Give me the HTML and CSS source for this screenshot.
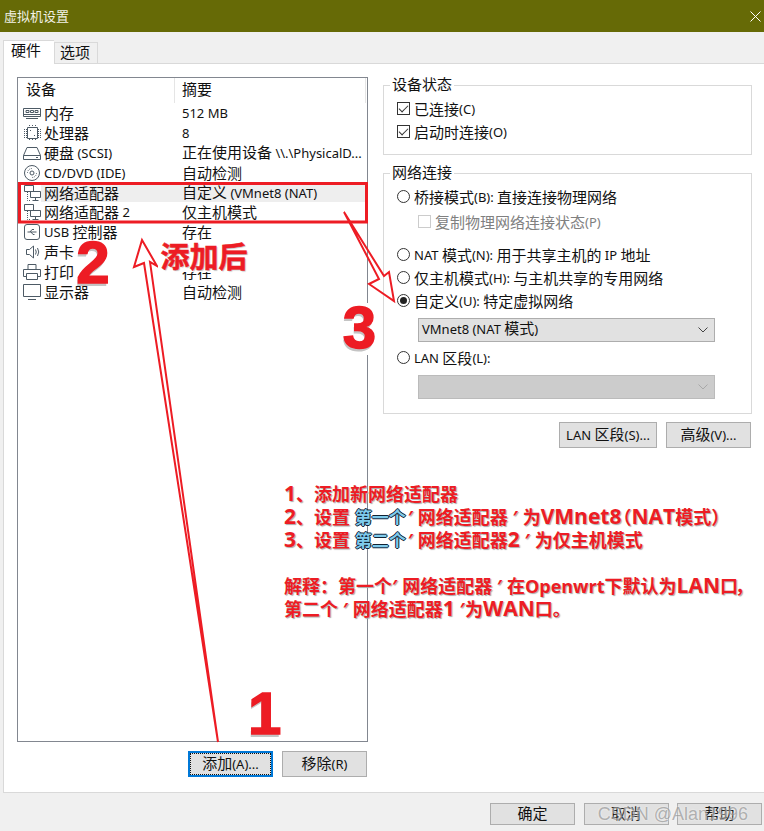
FILE: index.html
```html
<!DOCTYPE html>
<html lang="zh-CN">
<head>
<meta charset="utf-8">
<title>虚拟机设置</title>
<link rel="stylesheet" href="styles.css">
</head>
<body>
<div class="page">
  <header class="titlebar">
    <span class="title">虚拟机设置</span>
    <svg class="close" viewBox="0 0 11 11"><path d="M.5.5l10 10M10.500.5l-10 10"/></svg>
  </header>
  <nav class="tabs">
    <div class="tab active">硬件</div>
    <div class="tab">选项</div>
  </nav>
  <main class="panel">
    <section class="leftcol">
      <div class="list">
        <div class="list-head">
          <div class="h1">设备</div>
          <div class="h2">摘要</div>
        </div>
        <div class="row">
          <div class="dev"><svg class="ic" viewBox="0 0 18 16"><path d="M.5 3.500h17v8h-17zM.5 9.500h17M3 5.500h3v2H3zM7.500 5.500h3v2h-3zM12 5.500h3v2h-3zM3 13.500h12"/></svg>内存</div>
          <div class="sum"><span class="l">512 MB</span></div>
        </div>
        <div class="row">
          <div class="dev"><svg class="ic" viewBox="0 0 18 16"><path d="M4.500 2.500h10v11h-10z"/><path class="dash" d="M1 4.500h3M1 6.500h3M1 8.500h3M1 10.500h3M1 12.500h3M15 4.500h3M15 6.500h3M15 8.500h3M15 10.500h3M15 12.500h3M6.500 0v2M9.500 0v2M12.500 0v2M6.500 14v2M9.500 14v2M12.500 14v2M7 5.500h1M11 10.500h1"/></svg>处理器</div>
          <div class="sum"><span class="l">8</span></div>
        </div>
        <div class="row">
          <div class="dev"><svg class="ic" viewBox="0 0 18 16"><path d="M4 2.500h10l3.500 8v4H.5v-4zM.5 10.500h17M13 12.500h2"/></svg>硬盘 <span class="l">(SCSI)</span></div>
          <div class="sum">正在使用设备 <span class="l">\\.\PhysicalD...</span></div>
        </div>
        <div class="row">
          <div class="dev"><svg class="ic" viewBox="0 0 18 16"><circle cx="9" cy="8" r="7.500"/><circle cx="9" cy="8" r="2"/><path class="dash" d="M4.500 8a4.500 4.500 0 0 1 4.500-4.500M13.500 8a4.500 4.500 0 0 1-4.500 4.500"/></svg><span class="l">CD/DVD (IDE)</span></div>
          <div class="sum">自动检测</div>
        </div>
        <div class="row selected">
          <div class="dev"><svg class="ic" viewBox="0 0 18 16"><path d="M1.500.5h9v6h-9zM7.500 6.500h10v6h-10zM12.500 12.500v3M9.500 15.500h6"/><path class="dash" d="M4.500 7v8.500h3"/></svg>网络适配器</div>
          <div class="sum">自定义 <span class="l">(VMnet8 (NAT)</span></div>
        </div>
        <div class="row">
          <div class="dev"><svg class="ic" viewBox="0 0 18 16"><path d="M1.500.5h9v6h-9zM7.500 6.500h10v6h-10zM12.500 12.500v3M9.500 15.500h6"/><path class="dash" d="M4.500 7v8.500h3"/></svg>网络适配器 <span class="l">2</span></div>
          <div class="sum">仅主机模式</div>
        </div>
        <div class="row">
          <div class="dev"><svg class="ic" viewBox="0 0 18 16"><rect x="1.500" y=".5" width="15" height="15" rx="2.500"/><path d="M4.500 8h9M7 8l2-2.500h2M8 8l2 2.500h1.500"/></svg><span class="l">USB</span> 控制器</div>
          <div class="sum">存在</div>
        </div>
        <div class="row">
          <div class="dev"><svg class="ic" viewBox="0 0 18 16"><path d="M3.500 5.500h3l4-3.500v12l-4-3.500h-3zM12.500 5.500q1.500 2.500 0 5M14.500 4q2.500 4 0 8"/></svg>声卡</div>
          <div class="sum">存在</div>
        </div>
        <div class="row">
          <div class="dev"><svg class="ic" viewBox="0 0 18 16"><path d="M5 5V.5h8V5M3 12.500H.5V5.500h17v7H15M3.500 9.500h11v6h-11z"/></svg>打印机</div>
          <div class="sum">存在</div>
        </div>
        <div class="row">
          <div class="dev"><svg class="ic" viewBox="0 0 18 16"><path d="M.5.5h17v12H.5zM5 15.500h8"/></svg>显示器</div>
          <div class="sum">自动检测</div>
        </div>
      </div>
      <div class="actions">
        <button class="btn default"><span class="inner">添加<span class="l">(A)...</span></span></button>
        <button class="btn">移除<span class="l">(R)</span></button>
      </div>
    </section>
    <section class="rightcol">
      <fieldset class="group status">
        <legend>设备状态</legend>
        <div class="opt"><span class="check on"></span>已连接<span class="l">(C)</span></div>
        <div class="opt"><span class="check on"></span>启动时连接<span class="l">(O)</span></div>
      </fieldset>
      <fieldset class="group network">
        <legend>网络连接</legend>
        <div class="opt"><span class="radio"></span>桥接模式<span class="l">(B):</span> 直接连接物理网络</div>
        <div class="opt sub off"><span class="check"></span>复制物理网络连接状态<span class="l">(P)</span></div>
        <div class="opt gap"><span class="radio"></span><span class="l">NAT</span> 模式<span class="l">(N):</span> 用于共享主机的 <span class="l">IP</span> 地址</div>
        <div class="opt"><span class="radio"></span>仅主机模式<span class="l">(H):</span> 与主机共享的专用网络</div>
        <div class="opt"><span class="radio on"></span>自定义<span class="l">(U):</span> 特定虚拟网络</div>
        <div class="select"><span><span class="l">VMnet8 (NAT</span> 模式<span class="l">)</span></span><svg class="chev" viewBox="0 0 10 6"><path d="M.5.5L5 5 9.500.5"/></svg></div>
        <div class="opt lan"><span class="radio"></span><span class="l">LAN</span> 区段<span class="l">(L):</span></div>
        <div class="select disabled"><span></span><svg class="chev" viewBox="0 0 10 6"><path d="M.5.5L5 5 9.500.5"/></svg></div>
      </fieldset>
      <div class="net-actions">
        <button class="btn lanbtn"><span class="l">LAN</span> 区段<span class="l">(S)...</span></button>
        <button class="btn">高级<span class="l">(V)...</span></button>
      </div>
    </section>
  </main>
  <footer class="footer">
    <button class="btn foot">确定</button>
    <button class="btn foot">取消</button>
    <button class="btn foot">帮助</button>
  </footer>

  <svg class="marks" viewBox="0 0 764 831">
    <rect class="box" x="19.500" y="183.500" width="347" height="38.500"/>
    <path class="arrow" d="M218 742L150 262L157 266L142 240L134 267L144 263L218 742"/>
    <path class="arrow" d="M344 212L379 279L369 284L394 301L389 272L384 276L344 212"/>
  </svg>
  <div class="big n1">1</div>
  <div class="big n2">2</div>
  <div class="big n3">3</div>
  <div class="added">添加后</div>
  <div class="notes">
    <p><span class="cap">1</span>、添加新网络适配器</p>
    <p><span class="cap">2</span>、设置 <span class="hl">第一个</span>′ 网络适配器 ′ 为<span class="cap">VMnet8</span><span class="pl">&#xFF08;</span><span class="cap">NAT</span>模式<span class="pr">&#xFF09;</span></p>
    <p><span class="cap">3</span>、设置 <span class="hl">第二个</span>′ 网络适配器<span class="cap">2</span> ′ 为仅主机模式</p>
    <p class="blank">&nbsp;</p>
    <p>解释&#xFF1A;第一个′ 网络适配器 ′ 在Openwrt下默认为<span class="cap">LAN</span>口<span class="pc">&#xFF0C;</span></p>
    <p>第二个 ′ 网络适配器<span class="cap">1</span> ′为<span class="cap">WAN</span>口。</p>
  </div>
  <div class="watermark">CSDN @Alan1996</div>
</div>
</body>
</html>
```
FILE: styles.css
```css
* { box-sizing: border-box; }
html, body { margin: 0; padding: 0; }
body {
  width: 764px;
  height: 831px;
  overflow: hidden;
  background: #f0f0f0;
  color: #111;
  font: 15px/20px "Noto Sans CJK SC", "Noto Sans", sans-serif;
}
.page { position: relative; width: 764px; height: 831px; overflow: hidden; }
.l { font-family: "Noto Sans", sans-serif; font-size: 13px; }

.titlebar {
  height: 32px;
  background: #666a06;
  color: #f2f2e6;
  display: flex;
  align-items: center;
  justify-content: space-between;
  padding: 0 3px 0 4px;
  font-size: 13px;
}
.close { width: 11px; height: 11px; fill: none; stroke: #fff; stroke-width: 1; }

.tabs { display: flex; align-items: flex-end; height: 31px; padding-left: 3px; }
.tab {
  width: 44px;
  height: 21px;
  border: 1px solid #d9d9d9;
  border-bottom: 0;
  background: #f0f0f0;
  text-align: center;
  line-height: 17px;
  padding-right: 2px;
}
.tab.active {
  width: 51px;
  height: 24px;
  margin-bottom: -1px;
  background: #fff;
  border-right: 0;
  line-height: 17px;
  padding-right: 6px;
  position: relative;
  z-index: 1;
}

.panel {
  width: 770px;
  height: 730px;
  margin-left: 3px;
  border: 1px solid #d9d9d9;
  background: #fff;
  padding: 11px 0 0 13px;
  display: grid;
  grid-template-columns: 351px 369px;
  column-gap: 15px;
  align-items: start;
}

.leftcol { padding-top: 2px; }
.list { height: 665px; border: 1px solid #828790; }
.list-head { display: flex; height: 25px; }
.h1 { width: 156px; padding: 1px 0 0 8px; }
.h2 { width: 192px; padding: 1px 0 0 7px; border-left: 1px solid #e5e5e5; border-right: 1px solid #e5e5e5; }
.row { display: grid; grid-template-columns: 164px 1fr; height: 19.900px; align-items: center; white-space: nowrap; line-height: 16px; }
.row.selected { background: linear-gradient(to right, transparent 23px, #eee 23px, #eee 347px, transparent 347px); }
.dev { display: flex; align-items: center; padding-left: 5px; white-space: pre; }
.sum { white-space: pre; }
.ic { width: 18px; height: 16px; margin-right: 3px; fill: none; stroke: #4d5a65; stroke-width: 1; flex: none; }
.dash { stroke-dasharray: 1 1; }

.actions { display: flex; justify-content: flex-end; gap: 9px; margin-top: 9px; padding-right: 1px; }
.btn {
  height: 26px;
  width: 85px;
  padding: 0 0 2px;
  background: #e1e1e1;
  border: 1px solid #adadad;
  color: #111;
  font: inherit;
  line-height: 20px;
}
.btn.default { border: 2px solid #0078d7; padding: 0; }
.inner { display: block; border: 1px dotted #111; height: 22px; line-height: 18px; }
.lanbtn { width: 98px; }

.group {
  margin: 0 0 8px;
  border: 1px solid #d9d9d9;
  padding: 0 0 0 13px;
}
.group legend { margin-left: -7px; padding: 0 2px 2px; line-height: 18px; }
.status { height: 80px; }
.status .opt:first-of-type { margin-top: 3px; }
.network { height: 251px; }
.network .opt:first-of-type { margin-top: 3px; }

.opt { display: flex; align-items: center; height: 23px; padding-bottom: 2px; white-space: pre; }
.sub { margin: 2px 0 0 21px; }
.off { color: #808080; }
.gap { margin-top: 10px; }
.lan { margin-top: 5px; }
.check, .radio {
  width: 13px;
  height: 13px;
  border: 1px solid #333;
  background: #fff;
  margin-right: 4px;
  flex: none;
  display: flex;
  align-items: center;
  justify-content: center;
}
.off .check { border-color: #ccc; }
.check.on::after {
  content: "";
  width: 8px;
  height: 4px;
  margin-top: -3px;
  border-left: 1px solid #333;
  border-bottom: 1px solid #333;
  transform: rotate(-45deg);
}
.radio { border-radius: 50%; }
.radio.on::after { content: ""; width: 7px; height: 7px; background: #222; border-radius: 50%; }

.select {
  width: 297px;
  height: 24px;
  margin: 5px 0 0 21px;
  display: flex;
  align-items: center;
  justify-content: space-between;
  padding: 0 4px 3px 3px;
  background: #e1e1e1;
  border: 1px solid #adadad;
}
.select.disabled { background: #ccc; border-color: #bbb; }
.chev { width: 10px; height: 6px; margin: 3px 2px 0 0; fill: none; stroke: #444; stroke-width: 1; }
.disabled .chev { stroke: #a8a8a8; }

.net-actions { display: flex; justify-content: flex-end; gap: 9px; margin-top: 2px; padding-right: 1px; }

.footer { display: flex; justify-content: flex-end; gap: 8.500px; padding: 10px 2px 0 0; }
.foot { height: 22px; width: 85px; line-height: 18px; }

.marks { position: absolute; left: 0; top: 0; width: 764px; height: 831px; pointer-events: none; }
.box { fill: none; stroke: #ed1c24; stroke-width: 3; }
.arrow { fill: none; stroke: #ed1c24; stroke-width: 2; }

.big {
  position: absolute;
  background: #fff;
  color: #ed1c24;
  font: 700 60px/46px "Liberation Sans", sans-serif;
  -webkit-text-stroke: 1.500px #ed1c24;
  text-shadow: -1px 3px 0 #c4c4c4;
  text-align: center;
  border-radius: 6px;
}
.n1 { left: 248px; top: 691px; width: 32px; height: 50px; background: none; }
.n2 { left: 74px; top: 240px; width: 38px; height: 46px; }
.n3 { left: 341px; top: 303px; width: 37px; height: 52px; padding-top: 2px; }

.added {
  position: absolute;
  left: 158px;
  top: 240px;
  width: 92px;
  height: 32px;
  background: #fff;
  color: #ed1c24;
  font-size: 29px;
  font-weight: 700;
  line-height: 30px;
  text-align: center;
  -webkit-text-stroke: .5px #ed1c24;
  text-shadow: 1px 1px 1px #bbb;
}

.notes {
  position: absolute;
  left: 284px;
  top: 483px;
  white-space: nowrap;
  color: #ed1c24;
  font: 700 18px/23px "Open Sans", "Noto Sans CJK SC", sans-serif;
  text-shadow: 1px 1px 1px #aaa;
}
.notes p { margin: 0; height: 23px; }
.cap { font-size: 21px; line-height: 20px; }
.pl { margin-left: -8px; }
.pr { margin-right: -9px; }
.pc { margin-left: -3px; }
.hl {
  color: #7fcbec;
  font-size: 17px;
  margin-right: 2px;
  text-shadow: -1px 0 0 #123, 1px 0 0 #123, 0 -1px 0 #123, 0 1px 0 #123;
}

.watermark {
  position: absolute;
  right: 16px;
  top: 802px;
  color: rgba(120, 120, 120, .55);
  font: 18px/24px "Liberation Sans", sans-serif;
  text-shadow: 0 0 2px rgba(255, 255, 255, .8);
  white-space: nowrap;
}
```
